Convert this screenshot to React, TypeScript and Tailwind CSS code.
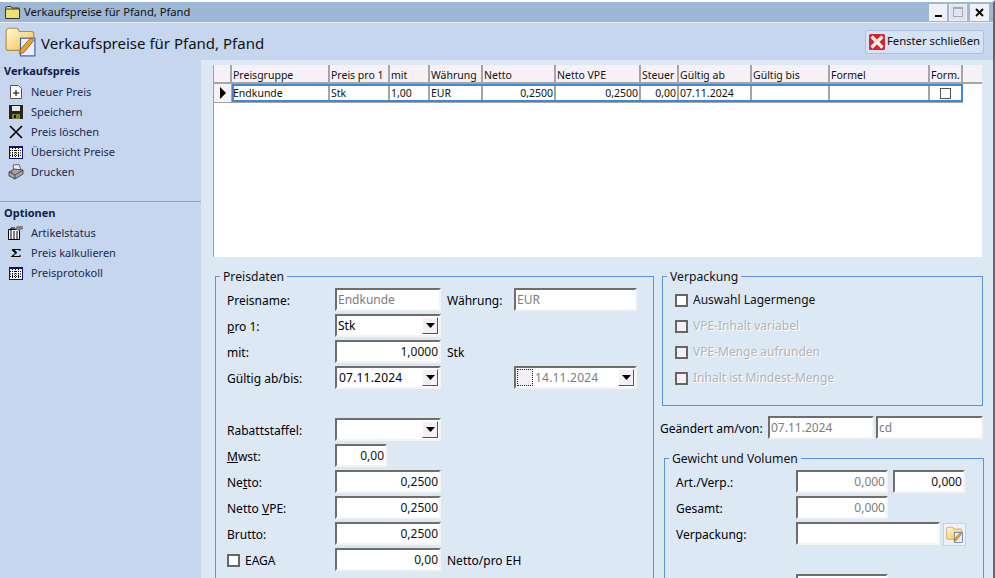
import type { ReactNode } from 'react';

const font = "[font-family:'Noto_Sans',sans-serif]";
const sunken = 'border-2 border-t-[#6e6e6e] border-l-[#6e6e6e] border-r-[#f4f4f4] border-b-[#f4f4f4] bg-white';

const columns = [
  { label: 'Preisgruppe', value: 'Endkunde', w: 'w-[98px]' },
  { label: 'Preis pro 1', value: 'Stk', w: 'w-[60px]' },
  { label: 'mit', value: '1,00', w: 'w-[40px]' },
  { label: 'Währung', value: 'EUR', w: 'w-[53px]' },
  { label: 'Netto', value: '0,2500', w: 'w-[73px]', right: true },
  { label: 'Netto VPE', value: '0,2500', w: 'w-[85px]', right: true },
  { label: 'Steuer', value: '0,00', w: 'w-[38px]', right: true },
  { label: 'Gültig ab', value: '07.11.2024', w: 'w-[73px]' },
  { label: 'Gültig bis', value: '', w: 'w-[78px]' },
  { label: 'Formel', value: '', w: 'w-[100px]' },
  { label: 'Form.', value: '', w: 'w-[33px]', check: true },
];

function FolderPen({ size, id }: { size: number; id: string }) {
  return (
    <svg width={size} height={size} viewBox="0 0 28 28">
      <defs>
        <linearGradient id={id} x1="0" y1="0" x2="1" y2="1">
          <stop offset="0" stopColor="#fffbd8" />
          <stop offset="1" stopColor="#f2bd45" />
        </linearGradient>
      </defs>
      <path d="M1 5 Q1 2 4 2 H11 L13 5 H24 Q26 5 26 7 V22 H3 Q1 22 1 20 Z" fill={`url(#${id})`} stroke="#b09040" />
      <rect x="14" y="11" width="13" height="16" fill="#eaf2ff" stroke="#3a5a9a" />
      <path d="M13 25 L14 21 L23 11 L26 13 L17 24 Z" fill="#f0a030" stroke="#7a5010" strokeWidth="0.7" />
    </svg>
  );
}

function NewIcon() {
  return (
    <svg width="14" height="14" viewBox="0 0 14 14">
      <path d="M1.5 .5 H9.5 L12.5 3.5 V13.5 H1.5 Z" fill="#fff" stroke="#555" />
      <path d="M7 5 V11 M4 8 H10" stroke="#000" />
    </svg>
  );
}

function SaveIcon() {
  return (
    <svg width="14" height="14" viewBox="0 0 14 14">
      <rect width="14" height="14" fill="#26261a" />
      <rect x="3" y="1" width="8" height="5" fill="#e8e8e8" />
      <rect x="3" y="9" width="8" height="5" fill="#808030" />
      <rect x="5" y="10" width="2" height="3" fill="#111" />
    </svg>
  );
}

function CrossIcon() {
  return (
    <svg width="14" height="14" viewBox="0 0 14 14">
      <path d="M1 1 L13 13 M13 1 L1 13" stroke="#000" strokeWidth="1.7" />
    </svg>
  );
}

function GridIcon() {
  return (
    <svg width="14" height="13" viewBox="0 0 14 13">
      <rect x=".5" y=".5" width="13" height="12" fill="#fff" stroke="#101070" />
      <path d="M.5 1.5 H13.5" stroke="#101070" />
      <path d="M3.5 2 V12 M6.5 2 V12 M9.5 2 V12 M1 4.5 H13 M1 7 H13 M1 9.5 H13" stroke="#000" strokeDasharray="1 1" />
    </svg>
  );
}

function PrinterIcon() {
  return (
    <svg width="16" height="16" viewBox="0 0 16 16">
      <path d="M5 1 L11 0.5 L13 6 L6 7 Z" fill="#eeeeee" stroke="#444" strokeWidth=".8" />
      <path d="M1 8 L6 5 L15 6 V10 L7 15 L1 12 Z" fill="#a4a4a4" stroke="#333" strokeWidth=".8" />
      <path d="M1 8 L7 11 L15 6 M7 11 V15" fill="none" stroke="#333" strokeWidth=".8" />
      <path d="M3 8 H5" stroke="#d03030" />
      <path d="M3 7 H4" stroke="#30a030" />
    </svg>
  );
}

function StatusIcon() {
  return (
    <svg width="15" height="14" viewBox="0 0 15 14">
      <path d="M.5 3.5 H11.5 V13.5 H.5 Z" fill="#fff" stroke="#000" />
      <path d="M2 6 H10 M2 8 H10 M2 10 H10 M2 12 H10" stroke="#000" strokeDasharray="2 1" />
      <path d="M7 3 L9 0 H15 V3 L11 5 Z" fill="#808080" />
      <path d="M3 5 V2 H7" stroke="#000" fill="none" />
    </svg>
  );
}

function SigmaIcon() {
  return (
    <svg width="14" height="14" viewBox="0 0 14 14">
      <path d="M3 3.5 H11 V5 M3 3.5 L7 7 L3 10.5 H11 V9" fill="none" stroke="#000" strokeWidth="1.1" />
      <path d="M3.5 3.5 L7.5 7" stroke="#000" strokeWidth="1.8" />
    </svg>
  );
}

function CloseIcon() {
  return (
    <svg width="16" height="16" viewBox="0 0 16 16">
      <rect width="16" height="16" rx="1.5" fill="#d8242c" />
      <path d="M2.5 2.5 L13.5 13.5 M13.5 2.5 L2.5 13.5" stroke="#fff0e8" strokeWidth="3.2" />
    </svg>
  );
}

function Arrow() {
  return (
    <span className="flex h-[17px] w-[16px] shrink-0 items-center justify-center border border-t-[#fff] border-l-[#fff] border-r-[#555] border-b-[#555] bg-[#f4f0f6]">
      <svg width="9" height="5" viewBox="0 0 9 5">
        <path d="M0 0 H9 L4.5 5 Z" fill="#000" />
      </svg>
    </span>
  );
}

function Input({ w, children, right, muted }: { w: string; children?: ReactNode; right?: boolean; muted?: boolean }) {
  return (
    <div
      className={`${sunken} ${w} flex h-[23px] shrink-0 items-center px-[1px] ${right ? 'justify-end' : ''} ${muted ? 'text-[#7d7d7d]' : 'text-[#111]'}`}
    >
      {children}
    </div>
  );
}

function Select({ w, children, lead }: { w: string; children?: ReactNode; lead?: ReactNode }) {
  return (
    <div className={`${sunken} ${w} flex h-[23px] shrink-0 items-center px-[1px]`}>
      {lead}
      <span className="flex-1 whitespace-nowrap">{children}</span>
      <Arrow />
    </div>
  );
}

function Row({
  label,
  children,
  className = 'h-[26px]',
  labelW = 'w-[108px]',
}: {
  label: ReactNode;
  children?: ReactNode;
  className?: string;
  labelW?: string;
}) {
  return (
    <div className={`flex items-start ${className}`}>
      <div className={`flex h-[23px] shrink-0 items-center pt-[2px] ${labelW}`}>{label}</div>
      {children}
    </div>
  );
}

function Check({ label, disabled }: { label: string; disabled?: boolean }) {
  return (
    <div className="flex h-[26px] items-center gap-[5px]">
      <span className={`h-[13px] w-[13px] border-2 border-[#666] ${disabled ? 'bg-[#f4f0f6]' : 'bg-white'}`} />
      <span className={disabled ? 'text-[#b4b4b4] [text-shadow:1px_1px_0_#fff]' : 'text-[#111]'}>{label}</span>
    </div>
  );
}

function Group({ title, className, inner, children }: { title: string; className: string; inner: string; children: ReactNode }) {
  return (
    <fieldset className={`border border-[#5c93d8] ${className}`}>
      <legend className="ml-[4px] px-[3px] text-[12.2px] leading-[15px] text-[#111]">{title}</legend>
      <div className={inner}>{children}</div>
    </fieldset>
  );
}

function NavItem({ icon, label }: { icon: ReactNode; label: string }) {
  return (
    <div className="flex h-[20px] items-center">
      <span className="flex w-[31px] justify-center px-[1px]">{icon}</span>
      <span className="text-[#1a2a50]">{label}</span>
    </div>
  );
}

export default function App() {
  return (
    <div className={`${font} flex h-[578px] w-[995px] flex-col overflow-hidden border-t-2 border-r-2 border-t-white border-r-[#666] bg-[#c6d6ee] text-[11px]`}>
      {/* Titelleiste */}
      <div className="flex h-[21px] shrink-0 items-center border-b border-b-[#e4ecf6] bg-[#9db8d5] pl-[5px] pr-[4px]">
        <svg width="15" height="13" viewBox="0 0 15 13">
          <path d="M.5 2.5 Q.5 .5 2.5 .5 H6 L7 2 H13 Q14.5 2 14.5 3 V12.5 H.5 Z" fill="#f0e070" stroke="#333" />
          <path d="M1 3 H14" stroke="#333" />
        </svg>
        <span className="ml-[4px] flex-1 pt-[1px] text-[11.2px] text-[#111]">Verkaufspreise für Pfand, Pfand</span>
        <div className="flex items-center gap-[2px]">
          <button className="flex h-[17px] w-[18px] items-end justify-center border border-[#eef2f8] bg-[#f2f2f6] pb-[3px]">
            <span className="h-[2px] w-[7px] bg-black" />
          </button>
          <button className="flex h-[17px] w-[18px] items-center justify-center border border-[#eef2f8] bg-[#dfe4ee]">
            <span className="h-[10px] w-[10px] border border-t-2 border-[#a8a8b0]" />
          </button>
          <button className="ml-[1px] flex h-[17px] w-[19px] items-center justify-center border border-[#eef2f8] bg-[#f2f2f6]">
            <svg width="9" height="9" viewBox="0 0 9 9">
              <path d="M1 1 L8 8 M8 1 L1 8" stroke="#000" strokeWidth="1.8" />
            </svg>
          </button>
        </div>
      </div>

      {/* Kopfzeile */}
      <div className="flex h-[37px] shrink-0 items-center pl-[5px] pr-[9px]">
        <FolderPen size={31} id="folder-big" />
        <span className="ml-[5px] flex-1 pt-[4px] text-[15px] text-[#111]">Verkaufspreise für Pfand, Pfand</span>
        <button className="flex h-[24px] w-[119px] items-center justify-center gap-[2px] rounded-[2px] border border-[#aebfdc] bg-[#d6e2f5] text-[11.3px] text-[#111]">
          <CloseIcon />
          Fenster schließen
        </button>
      </div>

      <div className="flex min-h-0 flex-1">
        {/* Seitenleiste */}
        <aside className="w-[201px] shrink-0">
          <div className="pb-[19px] pl-[4px] pt-[3px]">
            <div className="mb-[3px] h-[16px] font-bold leading-[16px] text-[#10204a]">Verkaufspreis</div>
            <div className="-ml-[4px]">
              <NavItem icon={<NewIcon />} label="Neuer Preis" />
              <NavItem icon={<SaveIcon />} label="Speichern" />
              <NavItem icon={<CrossIcon />} label="Preis löschen" />
              <NavItem icon={<GridIcon />} label="Übersicht Preise" />
              <NavItem icon={<PrinterIcon />} label="Drucken" />
            </div>
          </div>
          <div className="border-t border-t-[#8aa4ca] pl-[4px] pt-[3px]">
            <div className="mb-[2px] h-[16px] font-bold leading-[16px] text-[#10204a]">Optionen</div>
            <div className="-ml-[4px]">
              <NavItem icon={<StatusIcon />} label="Artikelstatus" />
              <NavItem icon={<SigmaIcon />} label="Preis kalkulieren" />
              <NavItem icon={<GridIcon />} label="Preisprotokoll" />
            </div>
          </div>
        </aside>

        {/* Inhalt */}
        <main className="min-w-0 flex-1 bg-[#dde8f5] pl-[12px] pt-[5px]">
          <div className="h-[192px] w-[769px] border-l border-l-[#a0a0a0] bg-white text-[10.5px] text-[#111]">
            <div className="flex h-[19px] border-b-2 border-b-[#a5a5a5] bg-[#f5f1f6]">
              <div className="w-[18px] shrink-0 border-r-2 border-r-[#a5a5a5]" />
              {columns.map(c => (
                <div key={c.label} className={`${c.w} shrink-0 overflow-hidden whitespace-nowrap border-r-2 border-r-[#a5a5a5] pl-[1px] pt-[3px] leading-[14px]`}>
                  {c.label}
                </div>
              ))}
            </div>
            <div className="flex h-[19px] w-[749px] border-b border-b-[#a5a5a5]">
              <div className="flex w-[18px] shrink-0 items-center justify-center border-r border-r-[#a5a5a5] bg-[#f5f1f6]">
                <svg width="6" height="12" viewBox="0 0 6 12">
                  <path d="M0 0 L6 6 L0 12 Z" fill="#000" />
                </svg>
              </div>
              <div className="flex min-w-0 flex-1 outline-2 -outline-offset-2 outline-[#3f87cf]">
                {columns.map((c, i) => (
                  <div
                    key={c.label}
                    className={`${c.w} flex shrink-0 items-center whitespace-nowrap ${i < columns.length - 1 ? 'border-r-2 border-r-[#a5a5a5]' : ''} px-[1px] ${c.check ? 'justify-center' : 'pt-[2px]'} ${c.right ? 'justify-end' : ''}`}
                  >
                    {c.check ? <span className="mr-[2px] h-[11px] w-[11px] border border-[#555] bg-white" /> : c.value}
                  </div>
                ))}
              </div>
            </div>
          </div>

          <div className="mt-[12px] flex items-start text-[12px]">
            <Group title="Preisdaten" className="ml-[2px] h-[340px] w-[439px] shrink-0" inner="pl-[11px] pt-[4px]">
              <Row label="Preisname:">
                <Input w="w-[106px]" muted>Endkunde</Input>
                <div className="flex h-[23px] w-[73px] items-center pl-[6px] pt-[2px]">Währung:</div>
                <Input w="w-[123px]" muted>EUR</Input>
              </Row>
              <Row label={<span><u>p</u>ro 1:</span>}>
                <Select w="w-[106px]">Stk</Select>
              </Row>
              <Row label="mit:">
                <Input w="w-[106px]" right>1,0000</Input>
                <div className="flex h-[23px] items-center pl-[6px] pt-[2px]">Stk</div>
              </Row>
              <Row label="Gültig ab/bis:" className="h-[52px]">
                <Select w="w-[106px]"><span className="pl-[1px] tracking-[0.2px]">07.11.2024</span></Select>
                <div className="w-[73px]" />
                <Select
                  w="w-[123px]"
                  lead={<span className="mr-[2px] h-[17px] w-[16px] border border-dotted border-[#222] bg-[#f4f0f6]" />}
                >
                  <span className="text-[#7d7d7d] tracking-[0.2px]">14.11.2024</span>
                </Select>
              </Row>
              <Row label="Rabattstaffel:">
                <Select w="w-[106px]" />
              </Row>
              <Row label={<span><u>M</u>wst:</span>}>
                <Input w="w-[52px]" right>0,00</Input>
              </Row>
              <Row label={<span>Ne<u>t</u>to:</span>}>
                <Input w="w-[106px]" right>0,2500</Input>
              </Row>
              <Row label={<span>Netto <u>V</u>PE:</span>}>
                <Input w="w-[106px]" right>0,2500</Input>
              </Row>
              <Row label="Brutto:">
                <Input w="w-[106px]" right>0,2500</Input>
              </Row>
              <Row
                label={
                  <span className="flex items-center gap-[5px]">
                    <span className="h-[13px] w-[13px] border-2 border-[#666] bg-white" />
                    EAGA
                  </span>
                }
              >
                <Input w="w-[106px]" right>0,00</Input>
                <div className="flex h-[23px] items-center whitespace-nowrap pl-[6px] pt-[2px]">Netto/pro EH</div>
              </Row>
            </Group>

            <div className="ml-[6px] w-[325px] shrink-0">
              <Group title="Verpackung" className="ml-[2px] h-[137px] w-[321px]" inner="pl-[12px] pt-[3px]">
                <Check label="Auswahl Lagermenge" />
                <Check label="VPE-Inhalt variabel" disabled />
                <Check label="VPE-Menge aufrunden" disabled />
                <Check label="Inhalt ist Mindest-Menge" disabled />
              </Group>
              <div className="mt-[10px] flex h-[23px] items-start">
                <div className="flex h-[23px] w-[108px] shrink-0 items-center whitespace-nowrap pt-[2px]">Geändert am/von:</div>
                <Input w="w-[106px]" muted>07.11.2024</Input>
                <div className="w-[2px]" />
                <Input w="w-[107px]" muted>cd</Input>
              </div>
              <Group title="Gewicht und Volumen" className="ml-[4px] mt-[12px] h-[140px] w-[320px]" inner="pl-[11px] pt-[4px]">
                <Row label="Art./Verp.:" labelW="w-[120px]">
                  <Input w="w-[92px]" right muted>0,000</Input>
                  <div className="w-[5px]" />
                  <Input w="w-[72px]" right>0,000</Input>
                </Row>
                <Row label="Gesamt:" labelW="w-[120px]">
                  <Input w="w-[92px]" right muted>0,000</Input>
                </Row>
                <Row label="Verpackung:" labelW="w-[120px]" className="h-[52px]">
                  <Input w="w-[144px]" />
                  <button className="ml-[3px] mt-[1px] flex h-[23px] w-[23px] items-center justify-center border border-[#c8d2e0] bg-[#eef2f8]">
                    <FolderPen size={17} id="folder-small" />
                  </button>
                </Row>
                <Row label="" labelW="w-[120px]">
                  <Input w="w-[92px]" />
                </Row>
              </Group>
            </div>
          </div>
        </main>
      </div>
    </div>
  );
}
